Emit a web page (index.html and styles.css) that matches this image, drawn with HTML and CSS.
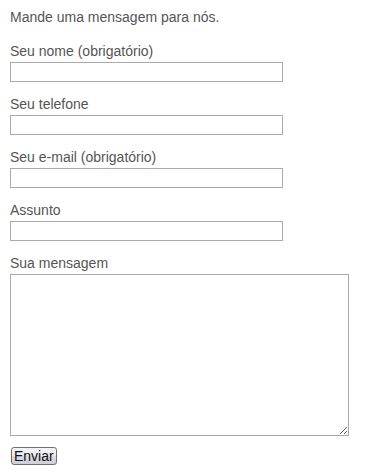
FILE: index.html
```html
<!DOCTYPE html>
<html>
  <head>
    <meta charset="utf-8" />
    <title>Contato</title>
    <link rel="stylesheet" href="styles.css">
  </head>
  <body>
    <main class="contact">
      <p class="intro">Mande uma mensagem para nós.</p>
      <form class="contact-form">
        <div class="field">
          <label for="nome">Seu nome (obrigatório)</label>
          <input type="text" id="nome" class="text-input">
        </div>
        <div class="field">
          <label for="telefone">Seu telefone</label>
          <input type="text" id="telefone" class="text-input">
        </div>
        <div class="field">
          <label for="email">Seu e-mail (obrigatório)</label>
          <input type="text" id="email" class="text-input">
        </div>
        <div class="field">
          <label for="assunto">Assunto</label>
          <input type="text" id="assunto" class="text-input">
        </div>
        <div class="field">
          <label for="mensagem">Sua mensagem</label>
          <textarea id="mensagem" class="message-input"></textarea>
        </div>
        <button type="submit" class="send-button">Enviar</button>
      </form>
    </main>
  </body>
</html>
```

FILE: styles.css
```css
body {
  margin: 0;
  padding: 0 10px;
  font-family: "Liberation Sans", Arial, sans-serif;
  font-size: 14px;
  line-height: 20px;
  color: #555;
  background: #fff;
}

.intro {
  margin: 7px 0 14px;
}

.field {
  margin-bottom: 12px;
}

.field label {
  display: block;
}

.text-input {
  display: block;
  box-sizing: border-box;
  width: 273px;
  height: 20px;
  margin: 1px 0 0;
  padding: 1px 3px;
  border: 1px solid #aaa;
  font: inherit;
  color: #333;
}

.message-input {
  display: block;
  box-sizing: border-box;
  width: 339px;
  height: 162px;
  margin: 1px 0 0;
  padding: 2px 3px;
  border: 1px solid #aaa;
  font: inherit;
  resize: both;
}

.field:last-of-type {
  margin-bottom: 11px;
}

.send-button {
  display: block;
  box-sizing: border-box;
  height: 18px;
  margin-left: 1px;
  padding: 0 2px;
  font-family: "Liberation Sans", Arial, sans-serif;
  font-size: 14px;
  line-height: 14px;
  color: #111;
  border: 1px solid #707070;
  border-radius: 3px;
  background: linear-gradient(#f4f4f8, #ebebf0 50%, #dcdce4 50%, #cfcfd8);
}
```
